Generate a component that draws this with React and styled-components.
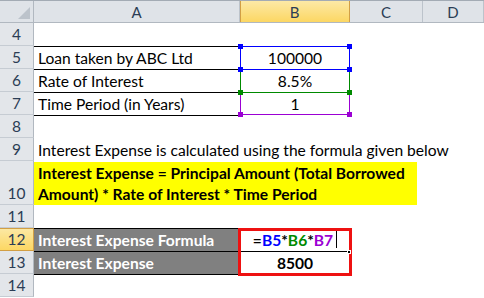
import React from "react";
import styled, { createGlobalStyle, css } from "styled-components";

const FONT = `Lato, "Open Sans", "Liberation Sans", sans-serif`;

const GlobalStyle = createGlobalStyle`
  html, body { margin: 0; padding: 0; background: #fff; }
  body { font-family: ${FONT}; }
  * { box-sizing: border-box; }
`;

const Sheet = styled.div`
  position: relative;
  width: 484px;
  height: 298px;
  overflow: hidden;
  background: #fff;
  font-family: ${FONT};
  font-size: 15.6px;
  color: #000;
`;

const HeaderRow = styled.div`
  display: flex;
  height: 23px;
  border-top: 1px solid #a3abb4;
  border-bottom: 1px solid #b1b8c0;
  background: #dfe3e8;
  font-size: 15px;
`;

const Corner = styled.div`
  position: relative;
  width: 34px;
  flex: none;
  border-right: 1px solid #b1b8c0;
  &::after {
    content: "";
    position: absolute;
    right: 3px;
    bottom: 3px;
    border-style: solid;
    border-width: 0 0 12px 12px;
    border-color: transparent transparent #bcc3cb transparent;
  }
`;

const ColHead = styled.div`
  width: ${(p) => (p.$w ? `${p.$w}px` : "auto")};
  flex: ${(p) => (p.$w ? "none" : "1")};
  display: flex;
  align-items: center;
  justify-content: center;
  border-right: 1px solid #bcc3cb;
  color: #2b3d55;
  ${(p) =>
    p.$sel &&
    css`
      background: linear-gradient(#fce9a6, #fcd763);
      border-right-color: #d29f45;
      box-shadow: inset 1px 0 0 #d29f45;
    `}
`;

const GridRow = styled.div`
  display: flex;
  height: ${(p) => p.$h || 23}px;
`;

const RowHead = styled.div`
  width: 34px;
  flex: none;
  display: flex;
  align-items: flex-end;
  justify-content: center;
  padding-bottom: 2px;
  background: #e3e6ea;
  border-right: 1px solid #b1b8c0;
  border-bottom: 1px solid #c6ccd3;
  color: #2b3d55;
  font-size: 15.5px;
  ${(p) =>
    p.$sel &&
    css`
      background: linear-gradient(#fce9a6, #fcd763);
      border-right-color: #d29f45;
      border-bottom-color: #d29f45;
      box-shadow: inset 0 1px 0 #d29f45;
    `}
`;

const Cell = styled.div`
  width: ${(p) => p.$w}px;
  flex: none;
  display: flex;
  align-items: flex-end;
  justify-content: ${(p) => (p.$center ? "center" : "flex-start")};
  padding: 0 4px 2px;
  white-space: nowrap;
  overflow: visible;
  line-height: 18px;
  background: ${(p) => p.$bg || "transparent"};
  color: ${(p) => p.$color || "#000"};
  font-weight: ${(p) => (p.$bold ? 700 : 400)};
  border-top: ${(p) => (p.$top ? "1px solid #000" : "none")};
`;

const MergedCell = styled.div`
  width: ${(p) => p.$w}px;
  flex: none;
  padding-top: 1px;
`;

const Highlight = styled.div`
  width: 383px;
  height: 43px;
  background: #ffff00;
  font-weight: 700;
  line-height: 21px;
  padding: 1px 4px 0;
  white-space: nowrap;
`;

const Ref = styled.span`
  color: ${(p) => p.$c};
`;

const Caret = styled.span`
  display: inline-block;
  width: 1px;
  height: 18px;
  margin-left: 3px;
  background: #000;
  align-self: center;
`;

const RangeBox = styled.div`
  position: absolute;
  left: ${(p) => p.$x}px;
  top: ${(p) => p.$y}px;
  width: ${(p) => p.$w}px;
  height: ${(p) => p.$h}px;
  border: 1px solid ${(p) => p.$c};
`;

const Handle = styled.div`
  position: absolute;
  width: 5px;
  height: 5px;
  background: ${(p) => p.$c};
  ${(p) => p.$v}: -3px;
  ${(p) => p.$hz}: -3px;
`;

const ResultBox = styled.div`
  position: absolute;
  left: 238px;
  top: 228px;
  width: 114px;
  height: 48px;
  border: 3px solid #ee1111;
`;

const FillHandle = styled.div`
  position: absolute;
  left: 347px;
  top: 250px;
  width: 4px;
  height: 4px;
  background: #000;
  border: 1px solid #fff;
`;

const W = { A: 206, B: 110, C: 73 };

function Range({ x, y, w, h, c }) {
  return (
    <RangeBox $x={x} $y={y} $w={w} $h={h} $c={c}>
      <Handle $c={c} $v="top" $hz="left" />
      <Handle $c={c} $v="top" $hz="right" />
      <Handle $c={c} $v="bottom" $hz="left" />
      <Handle $c={c} $v="bottom" $hz="right" />
    </RangeBox>
  );
}

const BLUE = "#0000ff";
const GREEN = "#008a00";
const PURPLE = "#9b00d3";

export default function App() {
  return (
    <>
      <GlobalStyle />
      <Sheet>
        <HeaderRow>
          <Corner />
          <ColHead $w={W.A}>A</ColHead>
          <ColHead $w={W.B} $sel>
            B
          </ColHead>
          <ColHead $w={W.C}>C</ColHead>
          <ColHead>D</ColHead>
        </HeaderRow>

        <GridRow>
          <RowHead>4</RowHead>
        </GridRow>
        <GridRow>
          <RowHead>5</RowHead>
          <Cell $w={W.A} $top>Loan taken by ABC Ltd</Cell>
          <Cell $w={W.B} $center>100000</Cell>
        </GridRow>
        <GridRow>
          <RowHead>6</RowHead>
          <Cell $w={W.A} $top>Rate of Interest</Cell>
          <Cell $w={W.B} $center>8.5%</Cell>
        </GridRow>
        <GridRow>
          <RowHead>7</RowHead>
          <Cell $w={W.A} $top>Time Period (in Years)</Cell>
          <Cell $w={W.B} $center>1</Cell>
        </GridRow>
        <GridRow>
          <RowHead>8</RowHead>
          <Cell $w={W.A} $top />
        </GridRow>
        <GridRow>
          <RowHead>9</RowHead>
          <Cell $w={W.A}>Interest Expense is calculated using the formula given below</Cell>
        </GridRow>
        <GridRow $h={44}>
          <RowHead>10</RowHead>
          <MergedCell $w={W.A + W.B + W.C}>
            <Highlight>
              Interest Expense = Principal Amount (Total Borrowed
              <br />
              Amount) * Rate of Interest * Time Period
            </Highlight>
          </MergedCell>
        </GridRow>
        <GridRow>
          <RowHead>11</RowHead>
        </GridRow>
        <GridRow>
          <RowHead $sel>12</RowHead>
          <Cell $w={W.A} $top $bg="#808080" $color="#fff" $bold>
            Interest Expense Formula
          </Cell>
          <Cell $w={W.B} $center $bold>
            =<Ref $c={BLUE}>B5</Ref>*<Ref $c={GREEN}>B6</Ref>*<Ref $c={PURPLE}>B7</Ref>
            <Caret />
          </Cell>
        </GridRow>
        <GridRow>
          <RowHead>13</RowHead>
          <Cell $w={W.A} $top $bg="#808080" $color="#fff" $bold>
            Interest Expense
          </Cell>
          <Cell $w={W.B} $center $bold $top>
            8500
          </Cell>
        </GridRow>
        <GridRow>
          <RowHead>14</RowHead>
          <Cell $w={W.A} $top />
        </GridRow>

        <Range x={240} y={92} w={110} h={23} c={PURPLE} />
        <Range x={240} y={69} w={110} h={24} c={GREEN} />
        <Range x={240} y={46} w={110} h={24} c={BLUE} />
        <ResultBox />
        <FillHandle />
      </Sheet>
    </>
  );
}
